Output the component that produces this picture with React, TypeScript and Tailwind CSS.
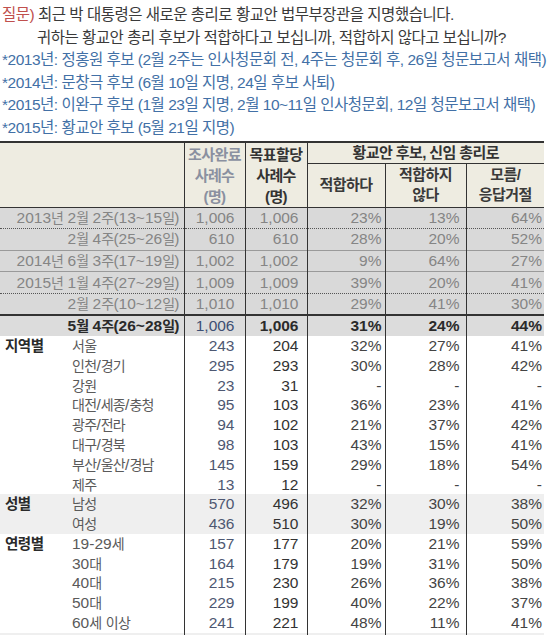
import React from "react";

type Row = { label: string; v: string[] };

const history: (Row & { line: string })[] = [
  { label: "2013년 2월 2주(13~15일)", v: ["1,006", "1,006", "23%", "13%", "64%"], line: "border-b border-dotted border-b-[#555]" },
  { label: "2월 4주(25~26일)", v: ["610", "610", "28%", "20%", "52%"], line: "border-b border-b-[#9a9a9a]" },
  { label: "2014년 6월 3주(17~19일)", v: ["1,002", "1,002", "9%", "64%", "27%"], line: "border-b border-b-[#9a9a9a]" },
  { label: "2015년 1월 4주(27~29일)", v: ["1,009", "1,009", "39%", "20%", "41%"], line: "border-b border-dotted border-b-[#555]" },
  { label: "2월 2주(10~12일)", v: ["1,010", "1,010", "29%", "41%", "30%"], line: "border-b-2 border-b-[#333]" },
];

const groups: { name: string; shade: boolean; rows: Row[] }[] = [
  {
    name: "지역별",
    shade: false,
    rows: [
      { label: "서울", v: ["243", "204", "32%", "27%", "41%"] },
      { label: "인천/경기", v: ["295", "293", "30%", "28%", "42%"] },
      { label: "강원", v: ["23", "31", "-", "-", "-"] },
      { label: "대전/세종/충청", v: ["95", "103", "36%", "23%", "41%"] },
      { label: "광주/전라", v: ["94", "102", "21%", "37%", "42%"] },
      { label: "대구/경북", v: ["98", "103", "43%", "15%", "41%"] },
      { label: "부산/울산/경남", v: ["145", "159", "29%", "18%", "54%"] },
      { label: "제주", v: ["13", "12", "-", "-", "-"] },
    ],
  },
  {
    name: "성별",
    shade: true,
    rows: [
      { label: "남성", v: ["570", "496", "32%", "30%", "38%"] },
      { label: "여성", v: ["436", "510", "30%", "19%", "50%"] },
    ],
  },
  {
    name: "연령별",
    shade: false,
    rows: [
      { label: "19-29세", v: ["157", "177", "20%", "21%", "59%"] },
      { label: "30대", v: ["164", "179", "19%", "31%", "50%"] },
      { label: "40대", v: ["215", "230", "26%", "36%", "38%"] },
      { label: "50대", v: ["229", "199", "40%", "22%", "37%"] },
      { label: "60세 이상", v: ["241", "221", "48%", "11%", "41%"] },
    ],
  },
  {
    name: "지지정당",
    shade: true,
    rows: [{ label: "새누리당", v: ["383", "386", "57%", "15%", "28%"] }],
  },
];

const padR = ["pr-[10px]", "pr-[8px]", "pr-[3px]", "pr-[6px]", "pr-[2px]"];
const vline = ["border-r border-r-[#333]", "border-r border-r-[#333]", "border-r border-r-[#333]", "border-r border-r-[#333]", ""];

// hangul in the sheet is narrower than the digits, so hangul runs get their own size
function K({ t, h }: { t: string; h: string }) {
  return (
    <>
      {t.split(/([가-힣]+)/).map((p, i) =>
        /[가-힣]/.test(p) ? (
          <span key={i} className={h}>
            {p}
          </span>
        ) : (
          p
        )
      )}
    </>
  );
}

const HG = "text-[14px] tracking-[-0.7px]";

export default function App() {
  return (
    <div className="w-[550px] h-[635px] overflow-hidden bg-white font-['Liberation_Sans','Noto_Sans_CJK_KR',sans-serif] text-[#3a3a3a]">
      <div className="pt-[4px] pl-[2px] text-[15.5px] leading-[22.6px] tracking-[-0.5px] whitespace-nowrap">
        <div>
          <span className="text-[#c0504d]">질문)</span> 최근 박 대통령은 새로운 총리로 황교안 법무부장관을 지명했습니다.
        </div>
        <div className="pl-[35px]">귀하는 황교안 총리 후보가 적합하다고 보십니까, 적합하지 않다고 보십니까?</div>
        <div className="text-[#4270a6]">*2013년: 정홍원 후보 (2월 2주는 인사청문회 전, 4주는 청문회 후, 26일 청문보고서 채택)</div>
        <div className="text-[#4270a6]">*2014년: 문창극 후보 (6월 10일 지명, 24일 후보 사퇴)</div>
        <div className="text-[#4270a6]">*2015년: 이완구 후보 (1월 23일 지명, 2월 10~11일 인사청문회, 12일 청문보고서 채택)</div>
        <div className="text-[#4270a6]">*2015년: 황교안 후보 (5월 21일 지명)</div>
      </div>

      <table className="mt-[1px] table-fixed border-collapse w-[544px] text-[15.5px] leading-[18px] whitespace-nowrap">
        <colgroup>
          <col className="w-[184px]" />
          <col className="w-[61px]" />
          <col className="w-[62px]" />
          <col className="w-[78px]" />
          <col className="w-[81px]" />
          <col className="w-[78px]" />
        </colgroup>
        <thead className="text-[15px] tracking-[-0.6px]">
          <tr className="h-[21px] bg-[#eeece1]">
            <td rowSpan={2} className="border-t-2 border-t-[#333] border-b-[1.5px] border-b-[#333] border-r border-r-[#333]" />
            <th rowSpan={2} className="border-t-2 border-t-[#333] border-b-[1.5px] border-b-[#333] border-r border-r-[#333] align-top pt-[1px] font-bold leading-[21px] text-[#8a90a0]">
              조사완료<br />사례수<br />(명)
            </th>
            <th rowSpan={2} className="border-t-2 border-t-[#333] border-b-[1.5px] border-b-[#333] border-r border-r-[#333] align-top pt-[1px] font-bold leading-[21px] text-[#333]">
              목표할당<br />사례수<br />(명)
            </th>
            <th colSpan={3} className="border-t-2 border-t-[#333] border-b border-b-[#333] font-bold text-[#333]">
              황교안 후보, 신임 총리로
            </th>
          </tr>
          <tr className="h-[41px] bg-[#eeece1] text-[#3a3a3a]">
            <th className="border-b-[1.5px] border-b-[#333] border-r border-r-[#333] font-bold">적합하다</th>
            <th className="border-b-[1.5px] border-b-[#333] border-r border-r-[#333] font-bold leading-[20.5px]">
              적합하지<br />않다
            </th>
            <th className="border-b-[1.5px] border-b-[#333] font-bold leading-[20.5px]">
              모름/<br />응답거절
            </th>
          </tr>
        </thead>
        <tbody>
          {history.map((r) => (
            <tr key={r.label} className={`h-[21.6px] bg-[#d9d9d9] text-[#858585] ${r.line}`}>
              <td className="text-right pr-[4px] border-r border-r-[#333]">
                <K t={r.label} h={HG} />
              </td>
              {r.v.map((x, i) => (
                <td key={i} className={`text-right ${padR[i]} ${vline[i]}`}>{x}</td>
              ))}
            </tr>
          ))}
          <tr className="h-[21px] bg-[#dcdcdc] font-bold text-[#2a2a2a]">
            <td className="text-right pr-[4px] border-r border-r-[#333]">
              <K t="5월 4주(26~28일)" h={HG} />
            </td>
            <td className="text-right pr-[10px] font-normal text-[#3d4f73] border-r border-r-[#333]">1,006</td>
            <td className="text-right pr-[8px] border-r border-r-[#333]">1,006</td>
            <td className="text-right pr-[3px] border-r border-r-[#333]">31%</td>
            <td className="text-right pr-[6px] border-r border-r-[#333]">24%</td>
            <td className="text-right pr-[2px]">44%</td>
          </tr>
          {groups.map((g) =>
            g.rows.map((r, ri) => (
              <tr key={g.name + r.label} className={`h-[19.8px] ${g.shade ? "bg-[#efefef]" : "bg-white"}`}>
                <td className="border-r border-r-[#333]">
                  <div className="flex">
                    <span className="w-[72px] pl-[5px] text-[14.5px] tracking-[-0.5px] font-bold text-[#2a2a2a]">{ri === 0 ? g.name : ""}</span>
                    <span className="text-[#5a5a5a]">
                      <K t={r.label} h={HG} />
                    </span>
                  </div>
                </td>
                {r.v.map((x, i) => (
                  <td
                    key={i}
                    className={`text-right ${padR[i]} ${vline[i]} ${i === 0 ? "text-[#4e5872]" : i === 1 ? "text-[#333]" : "text-[#444]"}`}
                  >
                    {x}
                  </td>
                ))}
              </tr>
            ))
          )}
        </tbody>
      </table>
    </div>
  );
}
